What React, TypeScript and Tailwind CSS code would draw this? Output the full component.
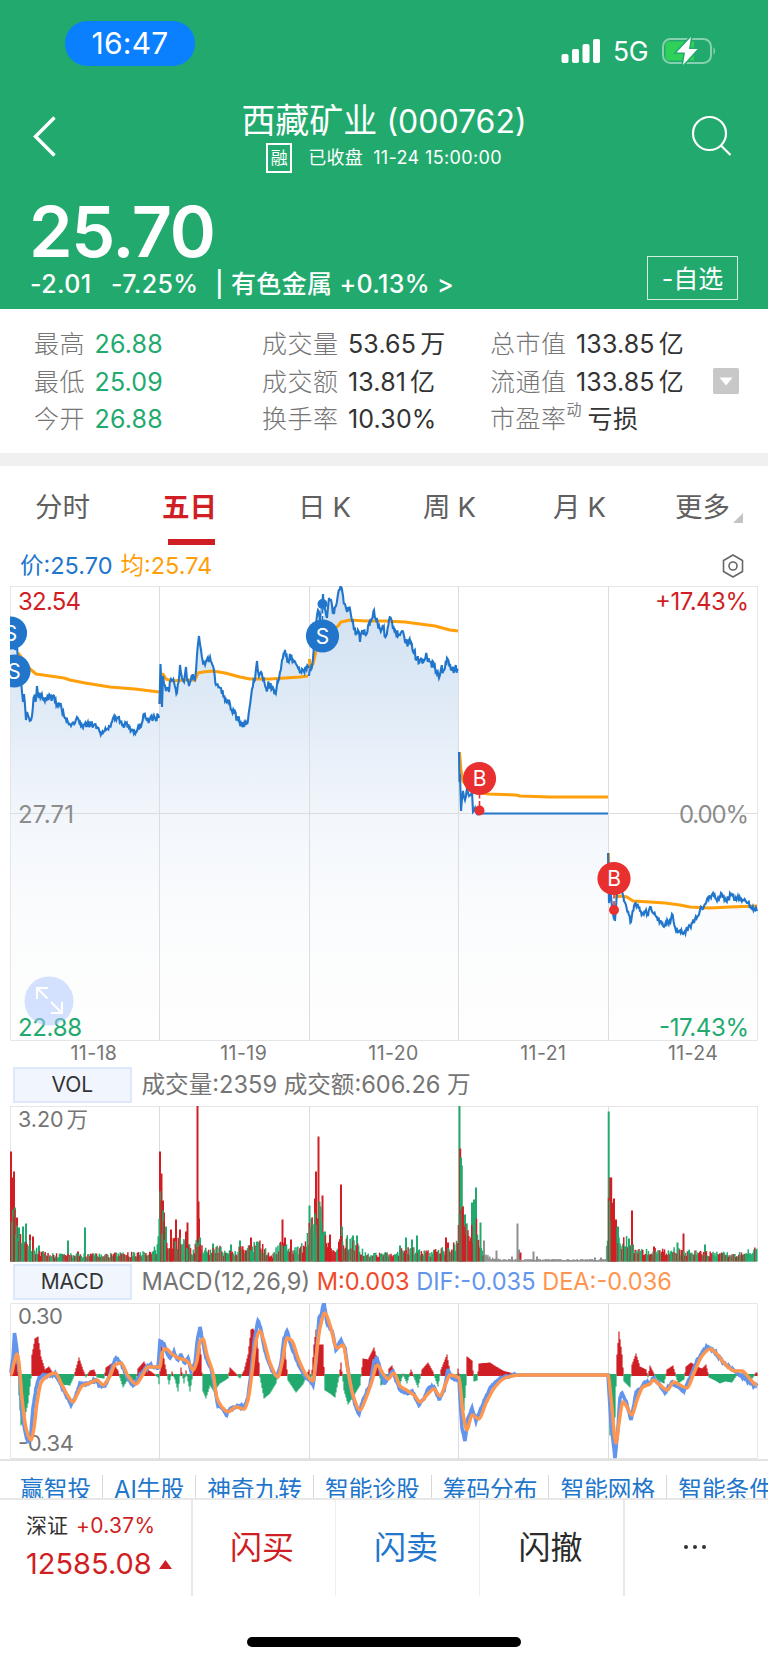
import React from "react";

type Point = [number, number];
type BarColor = "r" | "g" | "n";
type Spike = [number, number, BarColor];

const RED = "#d01f24";
const GREEN = "#22aa6e";
const BLUE = "#2176cc";
const ORANGE = "#ff9f0a";
const FONT = "font-['Inter','Noto_Sans_CJK_SC',sans-serif]";

const STATS = [
  [
    { label: "最高", value: "26.88" },
    { label: "最低", value: "25.09" },
    { label: "今开", value: "26.88" },
  ],
  [
    { label: "成交量", value: "53.65", unit: "万" },
    { label: "成交额", value: "13.81", unit: "亿" },
    { label: "换手率", value: "10.30%" },
  ],
  [
    { label: "总市值", value: "133.85", unit: "亿" },
    { label: "流通值", value: "133.85", unit: "亿" },
    { label: "市盈率", sup: "动", value: "亏损" },
  ],
];

const LINKS = ["赢智投", "AI牛股", "神奇九转", "智能诊股", "筹码分布", "智能网格", "智能条件单"];
const DATES = ["11-18", "11-19", "11-20", "11-21", "11-24"];
const DAY_LINES = [159.5, 309.5, 458.5, 608.5];

// One polyline per trading day
const PRICE: Point[][] = [
  [[14,50],[15,64],[17,60],[18,75],[20,85],[22,106],[23,116],[24,108],[26,134],[27,126],[29,132],[31,134],[32,130],[34,111],[36,113],[37,100],[38,109],[41,110],[44,114],[47,112],[50,110],[52,113],[54,110],[57,119],[60,118],[64,130],[68,136],[71,140],[75,137],[77,131],[80,136],[83,142],[87,138],[91,139],[94,139],[97,141],[100,146],[103,147],[106,144],[109,140],[112,136],[114,130],[117,132],[119,131],[122,139],[126,137],[129,142],[133,144],[136,146],[138,141],[141,141],[144,128],[147,135],[150,133],[155,132],[159,132]],
  [[159.5,118],[160.5,78],[162,121],[163,90],[164,98],[166,105],[168,102],[169,106],[171,93],[174,96],[177,107],[180,79],[182,92],[184,96],[186,81],[187,94],[189,100],[192,92],[194,93],[196,85],[197,69],[199,50],[201,64],[203,77],[205,79],[207,73],[210,71],[213,80],[216,99],[219,101],[221,102],[225,115],[230,118],[234,126],[238,133],[242,139],[245,138],[248,134],[250,119],[252,103],[255,94],[257,75],[259,90],[261,86],[263,94],[266,102],[269,99],[272,103],[275,106],[278,96],[280,86],[282,74],[285,64],[288,75],[290,68],[293,74],[296,78],[299,82],[302,83],[305,82],[309,82]],
  [[309,90],[312,80],[314,60],[318,24],[320,35],[323,8],[324,24],[327,32],[329,12],[331,14],[334,28],[336,20],[338,8],[341,1],[343,10],[345,18],[347,26],[350,23],[352,35],[354,44],[357,48],[359,46],[360,56],[362,45],[365,48],[368,40],[371,36],[374,24],[376,34],[380,43],[383,42],[386,50],[389,34],[392,36],[395,44],[398,50],[400,49],[402,45],[405,56],[408,58],[411,56],[414,65],[417,73],[420,74],[423,73],[427,71],[431,76],[434,80],[437,88],[439,92],[441,83],[444,84],[447,72],[450,78],[452,84],[455,82],[458,83]],
  [[459,166],[459.5,196],[460,188],[461,225],[463,205],[465,214],[467,202],[469,210],[472,205],[473,226],[475,222],[477,228],[480,227.5],[520,227.5],[608,227.5]],
  [[608,267],[609,317],[611,310],[613,328],[615,334],[617,308],[619,295],[622,305],[624,315],[626,319],[628,325],[631,336],[634,320],[637,319],[640,325],[643,327],[646,324],[648,330],[650,321],[653,327],[657,331],[660,335],[664,341],[668,336],[671,333],[672,328],[675,341],[679,345],[683,348],[686,344],[690,340],[695,333],[700,324],[704,320],[707,313],[711,312],[713,307],[717,315],[722,308],[726,315],[731,309],[735,314],[738,310],[743,314],[748,317],[752,323],[757,325]],
];

const AVERAGE: Point[][] = [
  [[18,67],[22,72],[30,83],[36,88],[50,90],[64,92],[70,94],[85,97],[110,101],[135,103],[159,106]],
  [[160,118],[161,90],[163,88],[166,93],[172,95],[185,94],[195,94],[198,87],[203,86],[213,85],[225,87],[240,91],[250,93],[270,93],[285,92],[300,91],[308,90]],
  [[309.5,73],[310,82],[313,78],[316,65],[330,45],[338,40],[341,36],[350,34],[365,35],[385,35],[405,36],[420,38],[435,40],[450,44],[458,45]],
  [[459.5,166],[461,185],[463,195],[470,204],[488,208],[516,209],[520,210],[550,211],[608,211]],
  [[608.5,267],[609,300],[616,311],[621,310],[627,311],[633,315],[650,316],[665,317],[680,319],[690,321],[710,322],[730,321],[757,320]],
];

const VOLUME_BASE: Point[] = [
  [11,60],[17,38],[22,30],[30,18],[40,10],[50,7],[100,7],[150,9],[158,16],[160,60],[168,22],[190,18],[192,10],[197,20],[202,14],[210,10],[217,17],[225,9],[260,18],[272,6],[280,18],[300,12],[308,28],[310,40],[318,50],[328,24],[335,15],[341,25],[355,20],[365,8],[385,8],[395,6],[400,12],[415,12],[430,9],[450,14],[458,20],[459,60],[465,44],[470,30],[476,40],[482,15],[485,6],[490,3],[500,1.6],[606,1.6],[609,70],[614,50],[620,20],[629,24],[635,11],[660,13],[680,12],[700,9],[740,9],[757,14],
];

const VOLUME_SPIKES: Spike[] = [
  [11,110,"r"],[12.5,84,"r"],[14,90,"r"],[15,54,"g"],[17,44,"r"],[19,34,"g"],[23,35,"g"],[26,38,"g"],[30,27,"r"],[33,25,"r"],[39,16,"g"],[68,21,"g"],[78,10,"r"],[85,34,"g"],
  [160,110,"r"],[161.5,88,"r"],[163,61,"r"],[164,49,"r"],[166,35,"g"],[171,32,"r"],[176,42,"r"],[180,32,"r"],[186,30,"r"],[187.5,39,"r"],[197.5,156,"r"],[198.5,60,"r"],[199,43,"r"],[200,24,"g"],[213,18,"g"],[231,17,"g"],[240,21,"g"],[251,24,"r"],[257,20,"g"],[282.5,42,"r"],[285,24,"r"],[291,22,"r"],
  [309.5,56,"g"],[315,63,"r"],[316,90,"r"],[318.5,125,"r"],[319.5,60,"g"],[320.5,55,"g"],[322.5,66,"r"],[325,30,"g"],[330,27,"r"],[341,77,"r"],[342,35,"g"],[347,24,"g"],[353,26,"g"],[357,26,"g"],[400,16,"g"],[406,24,"g"],[412,22,"g"],[417,26,"g"],[446,24,"r"],[448,19,"r"],
  [459.5,156,"g"],[460.2,113,"r"],[461,104,"g"],[461.8,96,"g"],[462.5,50,"r"],[465,47,"g"],[472,59,"g"],[474,62,"g"],[476,74,"g"],[480.5,39,"g"],[484,21,"n"],[496.5,11,"n"],[512,5,"n"],[517.5,38,"n"],[519,12,"n"],[520.5,9,"r"],[533.5,10,"n"],[537,5,"n"],[595,4,"n"],[601,4,"n"],
  [608.7,150,"g"],[610.2,84,"r"],[611.2,84,"r"],[612.5,52,"g"],[614,63,"r"],[616,42,"r"],[618,35,"g"],[629,23,"g"],[632,51,"r"],[654,15,"r"],[677.5,19,"g"],[683.5,28,"r"],[705,17,"g"],
];

const HISTOGRAM: Point[] = [
  [11,3],[14,30],[16,18],[18,3],[19,-20],[21,-50],[24,-45],[28,-28],[31,-3],[32,20],[35,36],[38,38],[41,18],[45,5],[49,8],[52,3],[57,-5],[62,-9],[70,-10],[74,-1],[79,17],[83,5],[86,-2],[90,4],[94,5],[97,-2],[104,-3],[106,7],[113,12],[118,4],[123,-12],[127,-5],[136,-5],[138,6],[144,13],[148,5],[158,-2],[159.5,-12],[161,34],[165,10],[169,-9],[172,3],[175,-4],[178,-16],[181,7],[184,-8],[186,4],[190,-16],[194,8],[198,40],[201,20],[203,-16],[206,-23],[210,-10],[214,-16],[220,-8],[228,-3],[230,7],[234,3],[240,-3],[244,4],[248,20],[251,45],[253,46],[257,40],[260,-2],[264,-23],[270,-18],[276,-8],[280,8],[285,25],[288,-5],[296,-17],[303,-9],[309,5],[311,-8],[314,30],[316,45],[319,30],[323,30],[325,-15],[330,-18],[335,-22],[339,-2],[341,12],[344,-15],[348,-29],[354,-20],[360,-10],[363,16],[368,15],[374,27],[378,12],[381,-10],[387,-5],[389,6],[392,9],[395,0],[400,-9],[403,1],[407,-8],[411,5],[414,-2],[418,-12],[422,5],[428,12],[433,3],[438,-11],[441,5],[447,20],[450,3],[454,-5],[457,-2],[458,6],[460,-4],[461,-35],[464,-35],[466,-10],[467,18],[472,14],[474,-6],[477,-5],[479,11],[490,12],[496,8],[504,3.5],[514,1],[522,0],[608,0],[610,-60],[615,-42],[617,20],[619,43],[622,20],[624,-6],[630,-12],[632,10],[636,21],[640,8],[646,5],[648,-2],[650,9],[654,1],[657,-4],[664,-8],[667,5],[673,9],[678,-8],[684,-4],[686,8],[691,12],[697,8],[702,6],[706,10],[709,-2],[715,-5],[720,-8],[725,-6],[732,-7],[738,2],[742,-4],[750,-6],[756,2],
];

const DIF: Point[] = [
  [11,70],[13,55],[14.5,30],[17,48],[20,75],[22,110],[25,128],[28,140],[31,130],[33,105],[36,85],[39,75],[43,72],[50,73],[55,70],[60,80],[66,92],[71,102],[75,95],[80,80],[88,81],[95,77],[100,83],[105,83],[111,68],[116,55],[121,60],[127,74],[134,82],[138,76],[143,68],[150,62],[158,65],[160,38],[164,41],[167,50],[170,55],[174,49],[178,57],[181,52],[185,60],[188,55],[191,68],[195,60],[197,40],[200,24],[203,40],[206,55],[211,65],[214,80],[218,103],[224,108],[227,111],[231,105],[240,103],[244,105],[248,95],[251,70],[254,40],[258,18],[261,27],[265,48],[272,68],[277,73],[281,60],[284,35],[287,28],[291,42],[297,58],[304,72],[309,77],[313,82],[316,60],[319,15],[321,12],[324,0],[327,20],[332,28],[336,47],[341,37],[345,45],[350,80],[355,102],[359,111],[363,97],[370,82],[374,58],[377,55],[384,80],[388,75],[393,68],[396,78],[400,87],[406,90],[412,88],[419,102],[424,96],[428,86],[434,84],[439,96],[444,88],[448,66],[452,75],[459,77],[462,125],[465,138],[468,115],[472,105],[476,118],[481,105],[490,85],[500,75],[515,72],[608,72],[611,120],[615,155],[618,125],[620,95],[622,90],[626,98],[631,117],[636,90],[640,86],[645,79],[650,80],[653,75],[660,82],[665,90],[672,79],[676,83],[684,88],[690,75],[697,57],[705,46],[707,44],[714,48],[722,58],[730,65],[738,70],[748,78],[754,83],[757,80],
];

const DEA: Point[] = [
  [11,72],[14,60],[17,51],[19,60],[22,95],[26,125],[31,137],[34,125],[37,100],[41,80],[46,74],[55,70],[62,82],[68,93],[73,99],[77,92],[82,83],[90,80],[97,77],[103,82],[110,73],[115,62],[121,60],[128,73],[136,81],[142,73],[148,64],[155,64],[160,64],[162,50],[166,46],[172,51],[178,55],[185,57],[189,60],[193,67],[197,58],[200,38],[203,36],[207,52],[213,70],[217,95],[222,104],[228,109],[236,104],[244,106],[248,97],[252,70],[256,38],[260,28],[264,38],[270,60],[278,74],[282,60],[287,35],[292,38],[298,55],[305,70],[313,78],[316,55],[320,25],[325,10],[330,22],[337,45],[343,42],[348,68],[353,92],[360,107],[366,95],[372,78],[377,62],[384,72],[388,76],[394,70],[400,83],[408,88],[415,93],[420,99],[427,92],[434,86],[440,93],[446,80],[450,72],[459,75],[463,110],[467,127],[472,112],[479,116],[486,100],[495,84],[505,75],[520,72],[608,72],[611,95],[616,140],[619,120],[623,99],[627,104],[632,112],[637,97],[643,84],[650,81],[653,77],[660,82],[667,87],[674,79],[680,82],[687,85],[694,70],[702,53],[710,46],[716,50],[724,60],[735,68],[742,68],[750,76],[757,82],
];

// Seeded generator, so every render gives the same ticks
function seeded(seed: number) {
  let s = seed;
  return () => {
    s = (s * 16807) % 2147483647;
    return s / 2147483647;
  };
}

function sample(points: Point[], x: number) {
  for (let i = 1; i < points.length; i++) {
    const [x0, y0] = points[i - 1];
    const [x1, y1] = points[i];
    if (x <= x1) return y0 + ((y1 - y0) * (x - x0)) / (x1 - x0 || 1);
  }
  return points[points.length - 1][1];
}

function line(points: Point[]) {
  return points.map(([x, y], i) => `${i ? "L" : "M"}${x.toFixed(1)} ${y.toFixed(1)}`).join("");
}

// Minute ticks between the key values; flat stretches stay flat
function withTicks(points: Point[], amp: number, seed: number): Point[] {
  const rand = seeded(seed);
  const out: Point[] = [];
  points.forEach((p, i) => {
    out.push(p);
    const next = points[i + 1];
    if (!next || next[0] - p[0] > 20) return;
    for (let x = p[0] + 0.8; x < next[0] - 0.4; x += 0.8) {
      out.push([x, Math.max(1, sample([p, next], x) + (rand() - 0.5) * amp)]);
    }
  });
  return out;
}

const TICKS = PRICE.map((day, i) => withTicks(day, [7, 9, 9, 4, 6][i], 31 + i * 17));
const DIF_TICKS = withTicks(DIF, 2.4, 7);

// Spline that passes through every point, slopes held flat at the peaks
function curve(points: Point[]) {
  const slope = points.map((p, i) => {
    if (i === 0 || i === points.length - 1) return 0;
    const a = (p[1] - points[i - 1][1]) / (p[0] - points[i - 1][0]);
    const b = (points[i + 1][1] - p[1]) / (points[i + 1][0] - p[0]);
    return a * b <= 0 ? 0 : (2 * a * b) / (a + b);
  });
  let d = `M${points[0][0]} ${points[0][1]}`;
  for (let i = 1; i < points.length; i++) {
    const [x0, y0] = points[i - 1];
    const [x1, y1] = points[i];
    const h = (x1 - x0) / 3;
    d += `C${x0 + h} ${y0 + slope[i - 1] * h} ${x1 - h} ${y1 - slope[i] * h} ${x1} ${y1}`;
  }
  return d;
}

function Grid({ height, middle }: { height: number; middle?: number }) {
  return (
    <g stroke="#dddddf" fill="none">
      <path d={`M10.5 0.5H757.5V${height - 0.5}H10.5Z`} stroke="#e6e6e7" />
      {DAY_LINES.map((x) => (
        <path key={x} d={`M${x} 0V${height}`} />
      ))}
      {middle && <path d={`M10 ${middle}H758`} />}
    </g>
  );
}

function Marker({ x, y, label, dot }: { x: number; y: number; label: "S" | "B"; dot?: number }) {
  const color = label === "S" ? BLUE : "#e83030";
  return (
    <g>
      {dot !== undefined && (
        <>
          <path d={`M${x} ${y}V${dot}`} stroke="#fff" strokeWidth="2" />
          <path d={`M${x} ${y}V${dot}`} stroke={color} strokeWidth="1.6" strokeDasharray="5 2.5" />
          <circle cx={x} cy={dot} r="5" fill={color} />
        </>
      )}
      <circle cx={x} cy={y} r="16.6" fill={color} />
      <text x={x} y={y + 7.5} fontSize="21" fill="#fff" textAnchor="middle">{label}</text>
    </g>
  );
}

function PriceChart() {
  return (
    <svg width="768" height="455" viewBox="0 0 768 455" className="block shrink-0">
      <defs>
        <linearGradient id="fill" gradientUnits="userSpaceOnUse" x1="0" y1="0" x2="0" y2="455">
          <stop offset="0" stopColor="#cfe0f2" />
          <stop offset="0.25" stopColor="#dfeaf6" />
          <stop offset="0.52" stopColor="#f3f7fc" />
          <stop offset="0.75" stopColor="#fbfcfd" />
          <stop offset="1" stopColor="#fefefe" />
        </linearGradient>
        <clipPath id="plot"><path d="M10 0H758V455H10Z" /></clipPath>
      </defs>
      {TICKS.map((day, i) => (
        <path key={i} d={`${line(day)}V455H${day[0][0]}Z`} fill="url(#fill)" />
      ))}
      <path d="M10.5 50H15V455H10.5Z" fill="url(#fill)" />
      <Grid height={455} middle={227.5} />
      <g clipPath="url(#plot)" fill="none" strokeLinejoin="round">
        {AVERAGE.map((day, i) => (
          <path key={i} d={line(day)} stroke={ORANGE} strokeWidth="3" />
        ))}
        {TICKS.map((day, i) => (
          <path key={i} d={line(day)} stroke={BLUE} strokeWidth="2.1" strokeLinejoin="miter" />
        ))}
      </g>
      <g clipPath="url(#plot)">
        <Marker x={10.5} y={47} label="S" />
        <Marker x={14} y={85} label="S" />
        <Marker x={322.5} y={50} dot={18} label="S" />
        <Marker x={479.5} y={192.5} dot={224.5} label="B" />
        <Marker x={614} y={292.5} dot={324} label="B" />
      </g>
      <g fontSize="24">
        <text x="18" y="23.5" fill={RED} textLength="63">32.54</text>
        <text x="749" y="23.5" fill={RED} textAnchor="end" textLength="94">+17.43%</text>
        <text x="18" y="236.500" fill="#8c8c8c" textLength="56">27.71</text>
        <text x="749" y="236.500" fill="#8c8c8c" textAnchor="end" textLength="70">0.00%</text>
        <text x="18" y="449.5" fill={GREEN} textLength="64">22.88</text>
        <text x="749" y="449.5" fill={GREEN} textAnchor="end" textLength="90">-17.43%</text>
      </g>
      <circle cx="49" cy="415" r="24.5" fill="#a9c5ff" opacity="0.5" />
      <path d="M37 413V402H48M37 402L47.500 412.500M62 416V427H51M62 427L51 416" fill="none" stroke="#fff" strokeWidth="2" />
    </svg>
  );
}

function VolumeChart() {
  const rand = seeded(97);
  const bars: Spike[] = [];
  for (let x = 11; x < 757; x += 0.95) {
    const quiet = x > 485 && x < 607;
    const h = sample(VOLUME_BASE, x) * (quiet ? 0.8 + rand() * 0.8 : 0.5 + rand() * 0.7);
    bars.push([x, h, quiet ? "n" : rand() > 0.5 ? "r" : "g"]);
  }
  const colors = { r: RED, g: GREEN, n: "#8f8f8f" };
  return (
    <svg width="768" height="156" viewBox="0 0 768 156" className="block shrink-0">
      <Grid height={156} />
      {VOLUME_SPIKES.map(([x, h, c], i) => (
        <path key={i} d={`M${x} 155.500V${155.5 - h}`} stroke={colors[c]} strokeWidth="2" />
      ))}
      {bars.map(([x, h, c], i) => (
        <path key={i} d={`M${x} 155.500V${155.5 - h}`} stroke={colors[c]} strokeWidth="1.5" />
      ))}
      <text x="18" y="20.500" fontSize="21.500" fill="#757575">3.20</text>
      <text x="66.500" y="20.500" fontSize="21.500" fill="#757575">万</text>
    </svg>
  );
}

function MacdChart() {
  let up = "";
  let down = "";
  for (let x = 11; x <= 757; x += 1) {
    const v = sample(HISTOGRAM, x);
    if (v >= 0) up += `M${x} 73V${(71.5 - v).toFixed(1)}`;
    else down += `M${x} 71V${(72.5 - v).toFixed(1)}`;
  }
  return (
    <svg width="768" height="156" viewBox="0 0 768 156" className="block shrink-0">
      <Grid height={156} />
      <path d={up} stroke={RED} strokeWidth="1.2" />
      <path d={down} stroke={GREEN} strokeWidth="1.2" />
      <text x="18" y="21" fontSize="22" fill="#757575" textLength="45">0.30</text>
      <text x="18" y="148" fontSize="22" fill="#757575" textLength="56">-0.34</text>
      <path d={line(DIF_TICKS)} fill="none" stroke="#6495ed" strokeWidth="3.6" />
      <path d={curve(DEA)} fill="none" stroke="#ff964f" strokeWidth="3.4" />
    </svg>
  );
}

function StatusBar() {
  return (
    <div className="flex h-[87px] justify-between pt-[21px] pl-[65px] pr-[52px]">
      <div className="flex h-[45px] w-[130px] items-center justify-center rounded-[22px] bg-[#0a80ff] text-[30px] tracking-[0.2px]">
        16:47
      </div>
      <svg width="156" height="30" viewBox="0 0 156 30" className="mt-[15px]">
        <g fill="#fff">
          <rect x="1.500" y="18" width="7" height="9" rx="2" />
          <rect x="12" y="13" width="7" height="14" rx="2" />
          <rect x="22.500" y="8" width="7" height="19" rx="2" />
          <rect x="33" y="3" width="7" height="24" rx="2" />
          <text x="53" y="25" fontSize="26.500" textLength="35.500">5G</text>
        </g>
        <rect x="103" y="3" width="48" height="24" rx="7.500" fill="none" stroke="#fff" strokeOpacity="0.45" strokeWidth="2" />
        <path d="M109 5.500H134V24.500H109Q105.500 24.500 105.500 21V9Q105.500 5.500 109 5.500Z" fill="#30d158" />
        <path d="M153.500 11Q156.500 15 153.500 19Z" fill="#fff" fillOpacity="0.5" />
        <path d="M131 1L116.500 16.500H125L123 29L137.500 13H129Z" fill="#fff" stroke={GREEN} strokeWidth="3" paintOrder="stroke" />
      </svg>
    </div>
  );
}

function Header() {
  return (
    <header className="h-[309px] shrink-0 bg-[#22aa6e] text-white">
      <StatusBar />
      <div className="flex h-[100px] justify-between">
        <svg width="80" height="100" viewBox="0 0 80 100" fill="none" stroke="#fff" strokeWidth="3.400">
          <path d="M54.500 30.500L35.500 49.500L54.500 68.500" />
        </svg>
        <div className="flex flex-col items-center">
          <h1 className="mt-[16px] h-[36px] text-[32px] leading-[36px] whitespace-nowrap">
            <span className="text-[34px]">西藏矿业</span> (000762)
          </h1>
          <div className="mt-[4px] flex h-[30px] items-center text-[18px] leading-none tracking-[0.35px] whitespace-pre">
            <span className="mr-[16px] flex h-[30px] w-[26px] items-center justify-center border-2 border-white text-[17px] tracking-normal">融</span>
            <span>已收盘</span>
            <span className="ml-[10px]">11-24 15:00:00</span>
          </div>
        </div>
        <svg width="80" height="100" viewBox="-10 0 80 100" fill="none" stroke="#fff" strokeWidth="2.200">
          <circle cx="11.500" cy="46.500" r="16.500" />
          <path d="M23 58.500L32.500 68" />
        </svg>
      </div>
      <div className="flex h-[122px] justify-between pl-[30px] pr-[30px]">
        <div>
          <div className="mt-[16px] -ml-px h-[58px] text-[70px] leading-[58px] font-semibold tracking-[-1.300px]">25.70</div>
          <div className="mt-[9px] flex h-[30px] items-center text-[25px] font-medium tracking-[0.350px] whitespace-nowrap">
            <span className="w-[81px]">-2.01</span>
            <span className="w-[104px]">-7.25%</span>
            <span>| 有色金属 +0.13% &gt;</span>
          </div>
        </div>
        <button className="mt-[69px] flex h-[44px] w-[91px] items-center justify-center border border-white/80 pt-[3px] text-[25px]">
          -自选
        </button>
      </div>
    </header>
  );
}

function Stats() {
  return (
    <section className="flex h-[144px] shrink-0 pt-[17px] pl-[34px]">
      {STATS.map((column, c) => (
        <div key={c} className={c === 2 ? "w-[223px]" : "w-[228px]"}>
          {column.map(({ label, value, sup, unit }: { label: string; value: string; sup?: string; unit?: string }) => (
            <div key={label} className="flex h-[37.500px] items-center text-[25px] whitespace-nowrap">
              <span className="font-light tracking-[0.500px] text-[#757575]">{label}</span>
              {sup && <sup className="top-[-10px] text-[15px] text-[#808080]">{sup}</sup>}
              <span className={`${c === 0 ? "text-[#22aa6e]" : "text-[#333]"} ${sup ? "ml-[6px] tracking-[0.500px]" : "ml-[9.500px] tracking-[0.150px]"}`}>
                {value}
              </span>
              {unit && <span className="ml-[4px] text-[#333]">{unit}</span>}
            </div>
          ))}
        </div>
      ))}
      <svg width="26" height="26" viewBox="0 0 26 26" className="mt-[42px]">
        <rect width="26" height="26" rx="1.500" fill="#c8c8c8" />
        <path d="M6.500 9.500H19.500L13 17.500Z" fill="#fff" />
      </svg>
    </section>
  );
}

function PeriodTab({ period, className }: { period: string; className: string }) {
  return (
    <span className={`flex gap-[7px] ${className}`}>
      {period}
      <span>K</span>
    </span>
  );
}

function Tabs() {
  return (
    <nav className="flex h-[80px] shrink-0 items-start pl-[35px] pt-[21px] text-[27.500px] leading-[40px] text-[#606060]">
      <span className="w-[127px]">分时</span>
      <div className="w-[136px] font-bold text-[#d01f24]">
        五日
        <div className="ml-[6px] mt-[12px] h-[6px] w-[47px] bg-[#d01f24]" />
      </div>
      <PeriodTab period="日" className="w-[125px]" />
      <PeriodTab period="周" className="w-[130px]" />
      <PeriodTab period="月" className="w-[122px]" />
      <span>更多</span>
      <svg width="10" height="10" viewBox="0 0 10 10" className="ml-[3px] mt-[26px]">
        <path d="M10 0V10H0Z" fill="#c4c4c4" />
      </svg>
    </nav>
  );
}

function IndicatorLabel({ name, children }: { name: string; children: React.ReactNode }) {
  return (
    <div className="flex h-[36px] items-center pl-[13px] text-[23.600px] whitespace-pre text-[#757575]">
      <span className="mr-[10px] flex h-[36px] w-[118.500px] items-center justify-center border-2 border-[#dde8fc] bg-[#f0f5fe] text-[21px] text-[#333]">
        {name}
      </span>
      {children}
    </div>
  );
}

function BottomBar() {
  return (
    <footer className="flex h-[96px] shrink-0">
      <div className="flex w-[191px] flex-col pl-[26px] pt-[10px]">
        <div className="flex h-[32px] items-center text-[21px]">
          <span className="text-[#333]">深证</span>
          <span className="ml-[8px] tracking-[0.300px] text-[#d01f24]">+0.37%</span>
        </div>
        <div className="mt-[2px] flex h-[40px] items-center text-[29px] text-[#d01f24]">
          12585.08
          <svg width="13" height="9" viewBox="0 0 13 9" className="ml-[7px]">
            <path d="M0 9L6.500 0L13 9Z" fill={RED} />
          </svg>
        </div>
      </div>
      <button className="w-[144px] border-l-2 border-[#e8e8e8] pr-[4px] text-[32px] text-[#d01f24]">闪买</button>
      <button className="w-[144px] border-l border-[#eee] pr-[3px] text-[32px] text-[#2176cc]">闪卖</button>
      <button className="w-[144px] border-l border-[#eee] pr-[2px] text-[32px] text-[#2b2b2b]">闪撤</button>
      <button className="flex w-[144px] items-center justify-center gap-[5px] border-l-2 border-[#e8e8e8] pr-[2px] pb-[3px]">
        <i className="size-[4px] rounded-full bg-[#333]" />
        <i className="size-[4px] rounded-full bg-[#333]" />
        <i className="size-[4px] rounded-full bg-[#333]" />
      </button>
    </footer>
  );
}

export default function App() {
  return (
    <div className={`flex h-[1663px] w-[768px] flex-col overflow-hidden bg-white ${FONT}`}>
      <Header />
      <Stats />
      <div className="h-[13px] shrink-0 bg-[#f0f0f0]" />
      <Tabs />
      <div className="flex h-[40px] shrink-0 items-center pl-[20px] pr-[24px] text-[23.500px]">
        <span className="text-[#2176cc]">价:25.70</span>
        <span className="ml-[8px] text-[#ff9f0a]">均:25.74</span>
        <svg width="22" height="24" viewBox="0 0 22 24" className="ml-auto" fill="none" stroke="#666" strokeWidth="1.6">
          <path d="M11 1L20.500 6.500V17.500L11 23L1.500 17.500V6.500Z" strokeLinejoin="round" />
          <circle cx="11" cy="12" r="4" />
        </svg>
      </div>
      <PriceChart />
      <div className="flex h-[26px] shrink-0 items-center pl-[19px] text-[19.500px] tracking-[0.400px] text-[#757575]">
        {DATES.map((date) => (
          <span key={date} className="w-[149.800px] shrink-0 text-center">{date}</span>
        ))}
      </div>
      <IndicatorLabel name="VOL">成交量:2359 成交额:606.26 万</IndicatorLabel>
      <div className="h-[3px] shrink-0" />
      <VolumeChart />
      <div className="h-[2px] shrink-0" />
      <IndicatorLabel name="MACD">
        MACD(12,26,9) <span className="text-[#f04b2b]">M:0.003 </span>
        <span className="text-[#6495ed]">DIF:-0.035 </span>
        <span className="text-[#ff964f]">DEA:-0.036</span>
      </IndicatorLabel>
      <div className="h-[3px] shrink-0" />
      <MacdChart />
      <div className="flex h-[41px] shrink-0 items-start overflow-hidden border-t-2 border-b-2 border-t-[#e2e2e2] border-b-[#e8e8e8] pl-[9px] pt-[14px]">
        {LINKS.map((link, i) => (
          <span
            key={link}
            className={`h-[36px] shrink-0 px-[11px] text-[23.700px] leading-[30px] whitespace-nowrap text-[#2176cc] ${i ? "border-l border-[#d8d8d8]" : ""}`}
          >
            {link}
          </span>
        ))}
      </div>
      <BottomBar />
      <div className="mt-[41px] h-[10px] w-[274px] shrink-0 self-center rounded-full bg-black" />
    </div>
  );
}
